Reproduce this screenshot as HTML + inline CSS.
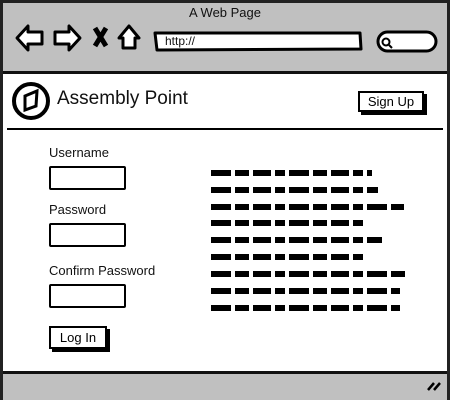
<!DOCTYPE html>
<html><head><style>
body{margin:0;width:450px;height:400px;overflow:hidden;background:#fff;font-family:"Liberation Sans",sans-serif;}
.a{position:absolute}
.box{position:absolute;border:2px solid #000;background:#fff;box-sizing:border-box;border-radius:2px}
.lbl{position:absolute;font-size:13px;color:#111}
.btn{position:absolute;border:2px solid #000;background:#fff;box-sizing:border-box;box-shadow:3px 3px 0 #000;font-size:13px;text-align:center}
</style></head><body>
<div class="a" style="left:0;top:0;width:450px;height:400px;box-sizing:border-box;border:3px solid #222;"></div>
<div class="a" style="left:3px;top:3px;width:444px;height:68px;background:#c0c0c0;border-bottom:3px solid #111"></div>
<div class="a" style="left:3px;top:371px;width:444px;height:26px;background:#c0c0c0;border-top:3px solid #111"></div>
<div class="lbl" style="left:0;width:450px;text-align:center;top:5px;font-size:13px">A Web Page</div>
<svg class="a" style="left:0;top:0" width="450" height="400">
<g fill="#fff" stroke="#000" stroke-width="3" stroke-linejoin="round">
<path d="M17 38 L28 26 L28 32 L42 32 L42 44 L28 44 L28 50 Z"/>
<path d="M80 38 L69 26 L69 32 L55 32 L55 44 L69 44 L69 50 Z"/>
<path d="M119 38 L129 26 L139 38 L135 38 L135 48 L123 48 L123 38 Z"/>
<path d="M155 33 L360 33 L361 49 L157 50 Z"/>
<rect x="378" y="32" width="58" height="19" rx="9.5"/>
</g>
<path d="M95 28 L106 46 M106 28 L95 46" stroke="#000" stroke-width="5"/>
<circle cx="386" cy="42" r="3.5" fill="none" stroke="#000" stroke-width="2"/>
<path d="M389 45 L392 48" stroke="#000" stroke-width="2"/>
<circle cx="31" cy="101" r="17" fill="none" stroke="#000" stroke-width="4"/>
<path d="M25 96 L37 91 L36 106 L25 110 Z" fill="none" stroke="#000" stroke-width="3"/>
<path d="M7 129 L443 129" stroke="#000" stroke-width="2"/>
<path d="M428 390 L434 383 M434 390 L440 383" stroke="#000" stroke-width="2.5"/>
<g stroke="#000" stroke-width="6" stroke-dasharray="20 4 14 4 18 4 10 4" stroke-linecap="butt">
<path d="M211 173 L372 173"/>
<path d="M211 190 L378 190"/>
<path d="M211 207 L404 207"/>
<path d="M211 223 L364 223"/>
<path d="M211 240 L382 240"/>
<path d="M211 257 L366 257"/>
<path d="M211 274 L409 274"/>
<path d="M211 291 L400 291"/>
<path d="M211 308 L400 308"/>
</g>
</svg>
<div class="lbl" style="left:165px;top:34px;font-size:12px">http://</div>
<div class="lbl" style="left:57px;top:88px;font-size:19px">Assembly Point</div>
<div class="btn" style="left:358px;top:91px;width:66px;height:21px;line-height:17px">Sign Up</div>
<div class="lbl" style="left:49px;top:145px">Username</div>
<div class="box" style="left:49px;top:166px;width:77px;height:24px"></div>
<div class="lbl" style="left:49px;top:202px">Password</div>
<div class="box" style="left:49px;top:223px;width:77px;height:24px"></div>
<div class="lbl" style="left:49px;top:263px">Confirm Password</div>
<div class="box" style="left:49px;top:284px;width:77px;height:24px"></div>
<div class="btn" style="left:49px;top:326px;width:58px;height:23px;line-height:19px">Log In</div>
</body></html>
